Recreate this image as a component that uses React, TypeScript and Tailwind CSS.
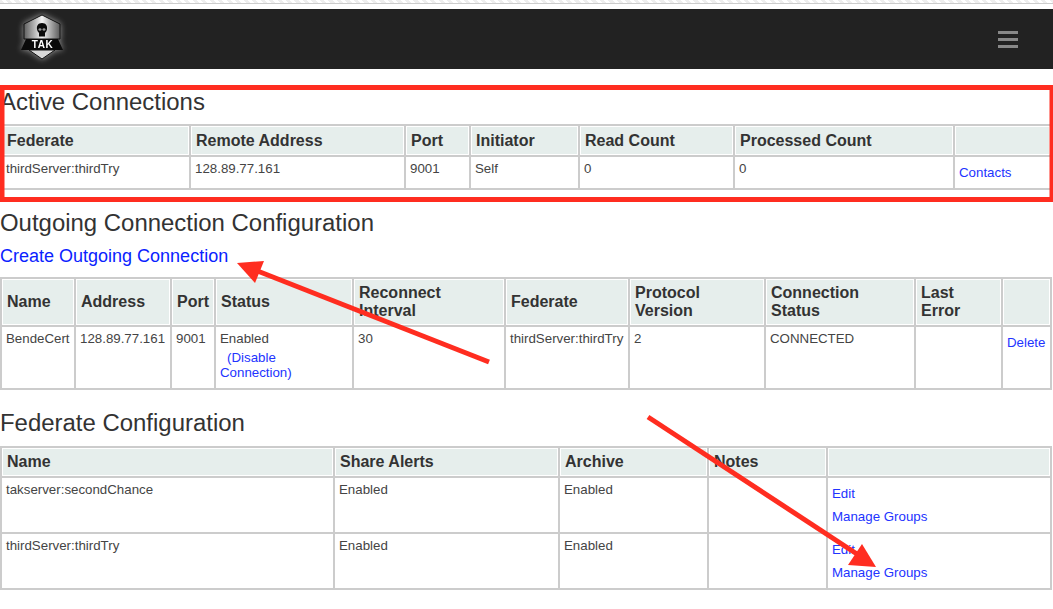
const font = { fontFamily: '"Liberation Sans", Arial, sans-serif' }

const th = 'border-2 border-[#ccc] bg-[#e6eeec] shadow-[inset_0_0_0_1px_#fff] px-[5px] text-left align-middle text-[16px] leading-[18px] font-bold text-[#333]'
const td = 'border-2 border-[#ccc] px-[4px] pt-[3px] align-top text-[13.3px] leading-[18px] text-[#444]'
const linkCell = 'border-2 border-[#ccc] px-[4px] pt-[8px] align-top'
const link = 'text-[13.3px] leading-[15px] text-[#2233ff]'
const heading = 'text-[23.95px] leading-[28px] text-[#333]'

const TakLogo = () => (
  <svg width="50" height="50" viewBox="0 0 50 50" className="ml-[18px] shrink-0 drop-shadow-[0_0_3px_rgba(255,255,255,0.55)]">
    <defs>
      <linearGradient id="metal" x1="0" y1="0" x2="1" y2="0">
        <stop offset="0" stopColor="#5f5f5f" />
        <stop offset="0.5" stopColor="#f4f4f4" />
        <stop offset="1" stopColor="#5a5a5a" />
      </linearGradient>
    </defs>
    <path d="M24 1 L42 10 L42 25 L6 25 L6 10 Z" fill="url(#metal)" stroke="#111" strokeWidth="1" />
    <path d="M24 9 C20 9 18.5 12 19 15 C19 17 20.5 18 21 19 L21 22.5 L27 22.5 L27 19 C27.5 18 29 17 29 15 C29.5 12 28 9 24 9 Z" fill="#0a0a0a" />
    <ellipse cx="22" cy="15.5" rx="1.5" ry="1.2" fill="#999" />
    <ellipse cx="26" cy="15.5" rx="1.5" ry="1.2" fill="#999" />
    <path d="M8 25 L40 25 L45 36 L3 36 Z" fill="#0a0a0a" />
    <text x="24.5" y="34" textAnchor="middle" fontSize="10" fontWeight="700" letterSpacing="0.6" fill="#fff" style={font}>TAK</text>
    <path d="M11 36 L37 36 L24 45 Z" fill="#d8d8d8" stroke="#111" strokeWidth="1" />
  </svg>
)

const Annotations = () => (
  <svg width="1053" height="609" className="absolute left-0 top-0 pointer-events-none">
    <rect x="2" y="87.5" width="1050" height="112" fill="none" stroke="#ff2d20" strokeWidth="5" />
    <line x1="489" y1="362" x2="255" y2="270" stroke="#ff2d20" strokeWidth="5" />
    <polygon points="237,263 264,261 255,283" fill="#ff2d20" />
    <line x1="648" y1="417" x2="860" y2="556" stroke="#ff2d20" strokeWidth="5" />
    <polygon points="876,567 862,544 848,565" fill="#ff2d20" />
  </svg>
)

export default function App() {
  return (
    <div className="relative w-[1053px] h-[609px] overflow-hidden bg-white" style={font}>
      <div className="h-[4px] border-b border-[#ccc] bg-[repeating-linear-gradient(45deg,#eee_0_3px,#fff_3px_6px)]" />
      <div className="mt-[5px] flex h-[60px] items-center justify-between bg-[#222]">
        <TakLogo />
        <div className="mr-[35px] flex w-[20px] flex-col gap-[4px]">
          <div className="h-[3px] bg-[#888]" />
          <div className="h-[3px] bg-[#888]" />
          <div className="h-[3px] bg-[#888]" />
        </div>
      </div>

      <h2 className={'mt-[19px] ' + heading}>Active Connections</h2>
      <table className="mt-[8px] w-[1050px] table-fixed border-collapse">
        <colgroup>
          <col className="w-[189px]" /><col className="w-[215px]" /><col className="w-[65px]" /><col className="w-[109px]" />
          <col className="w-[155px]" /><col className="w-[220px]" /><col className="w-[97px]" />
        </colgroup>
        <thead>
          <tr className="h-[31px]">
            <th className={th}>Federate</th><th className={th}>Remote Address</th><th className={th}>Port</th><th className={th}>Initiator</th>
            <th className={th}>Read Count</th><th className={th}>Processed Count</th><th className={th}></th>
          </tr>
        </thead>
        <tbody>
          <tr className="h-[33px]">
            <td className={td}>thirdServer:thirdTry</td><td className={td}>128.89.77.161</td><td className={td}>9001</td><td className={td}>Self</td>
            <td className={td}>0</td><td className={td}>0</td>
            <td className={linkCell}><a className={'block ' + link}>Contacts</a></td>
          </tr>
        </tbody>
      </table>

      <h2 className={'mt-[19px] ' + heading}>Outgoing Connection Configuration</h2>
      <a className="mt-[7px] block text-[18px] leading-[24px] text-[#0a22ff]">Create Outgoing Connection</a>
      <table className="mt-[9px] w-[1050px] table-fixed border-collapse">
        <colgroup>
          <col className="w-[74px]" /><col className="w-[96px]" /><col className="w-[44px]" /><col className="w-[138px]" /><col className="w-[152px]" />
          <col className="w-[124px]" /><col className="w-[136px]" /><col className="w-[150px]" /><col className="w-[87px]" /><col className="w-[49px]" />
        </colgroup>
        <thead>
          <tr className="h-[48px]">
            <th className={th}>Name</th><th className={th}>Address</th><th className={th}>Port</th><th className={th}>Status</th><th className={th}>Reconnect Interval</th>
            <th className={th}>Federate</th><th className={th}>Protocol Version</th><th className={th}>Connection Status</th><th className={th}>Last Error</th><th className={th}></th>
          </tr>
        </thead>
        <tbody>
          <tr className="h-[63px]">
            <td className={td}>BendeCert</td><td className={td}>128.89.77.161</td><td className={td}>9001</td>
            <td className={td}>
              Enabled
              <a className={'mt-[2px] block ' + link}><span className="pl-[7px]">(Disable</span><br />Connection)</a>
            </td>
            <td className={td}>30</td><td className={td}>thirdServer:thirdTry</td><td className={td}>2</td><td className={td}>CONNECTED</td><td className={td}></td>
            <td className={linkCell}><a className={'block ' + link}>Delete</a></td>
          </tr>
        </tbody>
      </table>

      <h2 className={'mt-[19px] ' + heading}>Federate Configuration</h2>
      <table className="mt-[9px] w-[1050px] table-fixed border-collapse">
        <colgroup>
          <col className="w-[333px]" /><col className="w-[225px]" /><col className="w-[149px]" /><col className="w-[119px]" /><col className="w-[224px]" />
        </colgroup>
        <thead>
          <tr className="h-[30px]">
            <th className={th}>Name</th><th className={th}>Share Alerts</th><th className={th}>Archive</th><th className={th}>Notes</th><th className={th}></th>
          </tr>
        </thead>
        <tbody>
          {['takserver:secondChance', 'thirdServer:thirdTry'].map((name) => (
            <tr key={name} className="h-[56px]">
              <td className={td}>{name}</td><td className={td}>Enabled</td><td className={td}>Enabled</td><td className={td}></td>
              <td className={linkCell}>
                <a className={'block ' + link}>Edit</a>
                <a className={'mt-[8px] block ' + link}>Manage Groups</a>
              </td>
            </tr>
          ))}
        </tbody>
      </table>

      <Annotations />
    </div>
  )
}
